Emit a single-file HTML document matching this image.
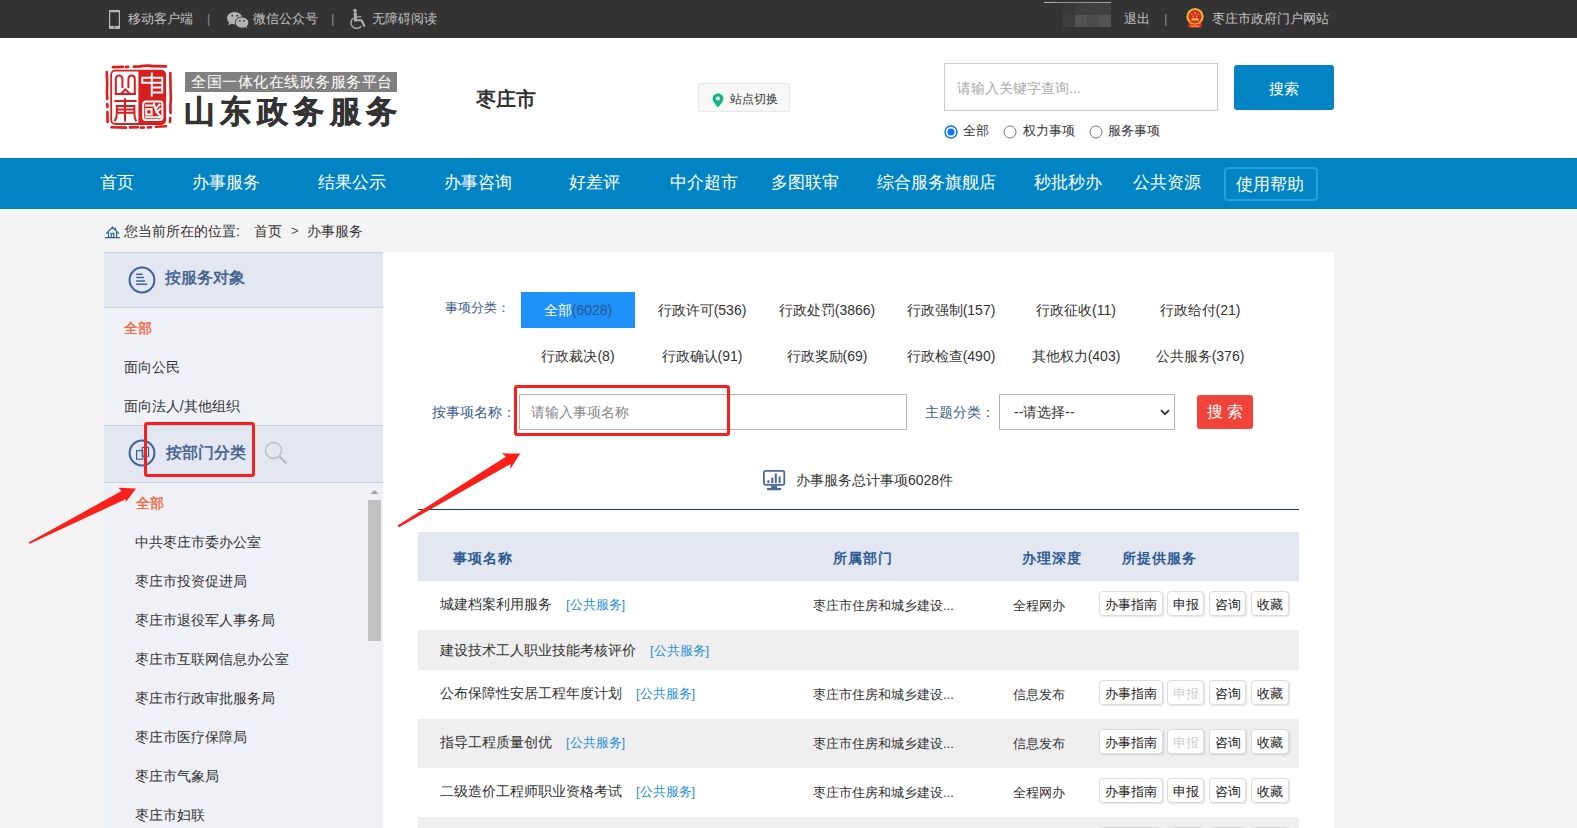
<!DOCTYPE html>
<html><head><meta charset="utf-8">
<style>
*{margin:0;padding:0;box-sizing:border-box}
html,body{width:1577px;height:828px;overflow:hidden;background:#f4f4f4;font-family:"Liberation Sans",sans-serif;color:#333}
.a{position:absolute;white-space:nowrap}
#top{position:absolute;left:0;top:0;width:1577px;height:38px;background:#333}
#top .t{position:absolute;top:9px;font-size:13px;line-height:20px;color:#c3c3c3}
#hdr{position:absolute;left:0;top:38px;width:1577px;height:120px;background:#fff}
#nav{position:absolute;left:0;top:158px;width:1577px;height:51px;background:#0084c4}
#nav .n{position:absolute;top:14px;font-size:17px;line-height:22px;color:#fff}
.th{top:296px;font-size:14px;line-height:20px;color:#2d5a92;font-weight:bold;letter-spacing:1.1px}
.row{left:35px;width:881px}
.c{position:absolute;white-space:nowrap;font-size:14px;line-height:20px;color:#333}
.tag{color:#2b8fd6;margin-left:14px;font-size:13px}
.d{font-size:13px}
.b{position:absolute;top:10px;height:25px;border:1px solid #dcdcdc;border-radius:4px;background:#fff;box-shadow:1px 1px 2px rgba(0,0,0,0.12);font-size:13px;line-height:25px;text-align:center;color:#222}
.b.dis{color:#d0d0d0}
</style></head><body>
<div id="top">
  <svg class="a" style="left:109px;top:10px" width="11" height="19" viewBox="0 0 11 19"><rect x="0" y="0" width="11" height="19" rx="0.8" fill="#b8b8b8"/><rect x="1.2" y="2.2" width="8.6" height="13.8" fill="#333"/><circle cx="5.5" cy="17.6" r="0.75" fill="#333"/></svg>
  <div class="t" style="left:128px">移动客户端</div>
  <div class="t" style="left:207px;color:#888">|</div>
  <svg class="a" style="left:226px;top:12px" width="23" height="17" viewBox="0 0 23 17"><ellipse cx="8.6" cy="6.2" rx="7.6" ry="6.2" fill="#b4b4b4"/><path d="M3 10.5 L2.3 13.2 L6 11.5z" fill="#b4b4b4"/><ellipse cx="16" cy="10.6" rx="6.8" ry="5.6" fill="#b4b4b4" stroke="#333" stroke-width="0.9"/><path d="M19.5 15 L21.2 16.6 L20.8 14z" fill="#b4b4b4"/><circle cx="6.2" cy="3.8" r="0.95" fill="#333"/><circle cx="11.2" cy="3.8" r="0.95" fill="#333"/><circle cx="13.8" cy="8.8" r="0.9" fill="#333"/><circle cx="18" cy="8.8" r="0.9" fill="#333"/></svg>
  <div class="t" style="left:253px">微信公众号</div>
  <div class="t" style="left:331px;color:#888">|</div>
  <svg class="a" style="left:349px;top:8px" width="17" height="22" viewBox="0 0 17 22"><circle cx="6" cy="2.6" r="1.75" fill="#b0b0b0"/><path d="M6.3 5.6 L6.3 12" stroke="#b0b0b0" stroke-width="3" stroke-linecap="round"/><path d="M7 8.9 L11.8 8.9" stroke="#b0b0b0" stroke-width="1.4" stroke-linecap="round"/><path d="M6 12.3 L12.5 12.3 L15.3 17.8" fill="none" stroke="#b0b0b0" stroke-width="2.1" stroke-linecap="round" stroke-linejoin="round"/><path d="M4.2 10.2 A5.7 5.7 0 1 0 12.2 18.2" fill="none" stroke="#b0b0b0" stroke-width="1.4"/></svg>
  <div class="t" style="left:372px">无障碍阅读</div>

  <div class="a" style="left:1044px;top:2px;width:67px;height:1px;background:linear-gradient(90deg,#bbb,#999 20%,#8a8a8a 50%,#999 80%,#aaa)"></div>
  <div class="a" style="left:1063px;top:3px;width:12px;height:12px;background:#383938"></div>
  <div class="a" style="left:1075px;top:3px;width:12px;height:12px;background:#3f3f3f"></div>
  <div class="a" style="left:1087px;top:3px;width:12px;height:12px;background:#3f3f3f"></div>
  <div class="a" style="left:1099px;top:3px;width:12px;height:12px;background:#404040"></div>
  <div class="a" style="left:1063px;top:15px;width:12px;height:12px;background:#3e3f41"></div>
  <div class="a" style="left:1075px;top:15px;width:12px;height:12px;background:#545454"></div>
  <div class="a" style="left:1087px;top:15px;width:12px;height:12px;background:#4a4c4e"></div>
  <div class="a" style="left:1099px;top:15px;width:12px;height:12px;background:#545252"></div>
  <div class="t" style="left:1124px">退出</div>
  <div class="t" style="left:1164px;color:#888">|</div>
  <svg class="a" style="left:1186px;top:8px" width="19" height="21" viewBox="0 0 19 21"><circle cx="9" cy="8.6" r="8.6" fill="#e8b83c"/><circle cx="9" cy="8.6" r="6.6" fill="#dc2a1e"/><circle cx="9" cy="5" r="1" fill="#f2c84a"/><circle cx="5.8" cy="6.2" r="0.7" fill="#f2c84a"/><circle cx="12.2" cy="6.2" r="0.7" fill="#f2c84a"/><circle cx="7.4" cy="8.2" r="0.7" fill="#f2c84a"/><circle cx="10.6" cy="8.2" r="0.7" fill="#f2c84a"/><path d="M6 10.2 H12 L13 12.6 H5z" fill="#f0c64a"/><path d="M2.2 13.5 Q9 16.5 15.8 13.5 L15.5 19.2 Q9 20.5 2.5 19.2z" fill="#e0301e"/><path d="M3.5 14.8 Q9 17.5 14.5 14.8" fill="none" stroke="#f0c64a" stroke-width="1"/><path d="M4.5 18.2 H13.5" stroke="#f0c64a" stroke-width="0.9"/></svg>
  <div class="t" style="left:1212px">枣庄市政府门户网站</div>
</div>

<div id="hdr">
  <svg class="a" style="left:104px;top:24px" width="70" height="70" viewBox="0 0 70 70">
    <g fill="none" stroke="#d81e1e" stroke-linecap="round">
    <path d="M9 5.2 L19 4.8 M22 5 L24 4.9 M30 4.6 L36 4.4 Q42 3.2 48 4 L62 4.4" stroke-width="2.8"/>
    <path d="M2.8 10 L3.2 22 Q2.6 30 3.3 37 M3.2 42 L3.5 45 M3.4 50 L3.6 60" stroke-width="2.6"/>
    <path d="M66.3 11 L66.6 28 Q67.2 36 66.4 44 L66.6 51 M66.2 56 L66 60" stroke-width="2.6"/>
    <path d="M7.5 65.3 L22 65.6 M26 65.4 L34 65.2 M37 65.6 L40 65.5 M44 65.4 L47 65.3 M52 64.8 L62 64.2" stroke-width="2.6"/>
    </g>
    <rect x="7.2" y="8.6" width="54" height="53.4" rx="4" fill="#fff" stroke="#d81e1e" stroke-width="1.8"/>
    <path d="M34.4 8.6 L57.2 8.6 Q61.2 8.6 61.2 12.6 L61.2 58 Q61.2 62 57.2 62 L34.4 62z" fill="#d81e1e"/>
    <g fill="none" stroke="#d81e1e" stroke-width="2" stroke-linecap="square">
      <path d="M11.8 31.8 L11.8 17.2 Q11.8 13.4 15.2 13.4 Q18.4 13.4 18.4 17.2 L18.4 25"/>
      <path d="M30.8 31.8 L30.8 17.2 Q30.8 13.4 27.6 13.4 Q24.4 13.4 24.4 17.2 L24.4 25"/>
      <path d="M11.8 32 L30.8 32 M16.8 32 L21.4 27.4 L26 32"/>
      <path d="M11.4 39 L31.6 39 M12.8 44 L30.4 44 L30.4 50.7 L12.8 50.7z M12.8 47.4 L30.4 47.4 M21 37.2 L21 58.4 M12.8 51 Q12.8 56 11 58.4 M30.4 51 Q30.4 56 31.8 58.4"/>
    </g>
    <g fill="none" stroke="#fff" stroke-width="2" stroke-linecap="square">
      <path d="M38.2 15.8 L47 15.8 M38.2 15.8 L38.2 20.8 L47 20.8 M47.8 11.6 L47.8 33.6 M50 15.8 L58.2 15.8 L58.2 30.4 M50 20.8 L58.2 20.8 M50 25.6 L58.2 25.6 M50 30.4 L58.2 30.4"/>
      <path d="M42 39.6 L56 39.6 Q58.4 39.6 58.4 42 L58.4 55.6 Q58.4 58 56 58 L41.6 58 Q39.2 58 39.2 55.6 L39.2 42.4 Q39.2 39.8 42 39.6 M42 43.4 L50 43.4 M42.2 47.2 L47.6 47.2 L47.6 52.6 L42.2 52.6z M42 55.2 L56 55.2 M50 42 Q51.4 50 56.4 54 M55.6 42.6 L52.8 45.6 M56 47 L52.6 50"/>
    </g>
  </svg>
  <div class="a" style="left:185px;top:34px;width:212px;height:20px;background:#808080"></div>
  <div class="a" style="left:191px;top:33px;font-size:15px;line-height:22px;color:#fff;letter-spacing:0.5px">全国一体化在线政务服务平台</div>
  <div class="a" style="left:184px;top:55px;font-size:31px;line-height:38px;color:#333;font-weight:bold;letter-spacing:5.4px;-webkit-text-stroke:0.5px #333">山东政务服务</div>
  <div class="a" style="left:476px;top:48px;font-size:20px;line-height:26px;color:#333;font-weight:bold">枣庄市</div>
  <div class="a" style="left:698px;top:45px;width:92px;height:29px;background:#f7f7f7;border:1px solid #e8e8e8"></div>
  <svg class="a" style="left:712px;top:54.8px" width="12" height="15" viewBox="0 0 12 15"><path d="M6 0.5 C2.8 0.5 0.6 2.8 0.6 5.8 C0.6 9 6 14.5 6 14.5 C6 14.5 11.4 9 11.4 5.8 C11.4 2.8 9.2 0.5 6 0.5z" fill="#14b87c"/><circle cx="6" cy="5.6" r="2" fill="#fff"/></svg>
  <div class="a" style="left:729.5px;top:52px;font-size:12px;line-height:18px;color:#333">站点切换</div>
  <div class="a" style="left:944px;top:25px;width:274px;height:48px;border:1px solid #ccc;background:#fff"></div>
  <div class="a" style="left:957px;top:41px;font-size:14px;line-height:18px;color:#aaa">请输入关键字查询...</div>
  <div class="a" style="left:1234px;top:27px;width:100px;height:45px;background:#0084c4;border-radius:3px"></div>
  <div class="a" style="left:1269px;top:41px;font-size:15px;line-height:20px;color:#fff">搜索</div>
  <svg class="a" style="left:943px;top:85.5px" width="16" height="16" viewBox="0 0 16 16"><circle cx="8" cy="8" r="6" fill="#fff" stroke="#0f76fa" stroke-width="1.5"/><circle cx="8" cy="8" r="3.6" fill="#0f76fa"/></svg>
  <div class="a" style="left:963px;top:84px;font-size:13px;line-height:18px;color:#333">全部</div>
  <svg class="a" style="left:1002px;top:85.5px" width="16" height="16" viewBox="0 0 16 16"><circle cx="8" cy="8" r="6" fill="#fff" stroke="#767676" stroke-width="1"/></svg>
  <div class="a" style="left:1023px;top:84px;font-size:13px;line-height:18px;color:#333">权力事项</div>
  <svg class="a" style="left:1088px;top:85.5px" width="16" height="16" viewBox="0 0 16 16"><circle cx="8" cy="8" r="6" fill="#fff" stroke="#767676" stroke-width="1"/></svg>
  <div class="a" style="left:1108px;top:84px;font-size:13px;line-height:18px;color:#333">服务事项</div>
</div>
<div id="nav">
  <div class="n" style="left:100px">首页</div>
  <div class="n" style="left:192px">办事服务</div>
  <div class="n" style="left:318px">结果公示</div>
  <div class="n" style="left:444px">办事咨询</div>
  <div class="n" style="left:569px">好差评</div>
  <div class="n" style="left:670px">中介超市</div>
  <div class="n" style="left:771px">多图联审</div>
  <div class="n" style="left:877px">综合服务旗舰店</div>
  <div class="n" style="left:1034px">秒批秒办</div>
  <div class="n" style="left:1133px">公共资源</div>
  <div class="a" style="left:1224px;top:8.5px;width:94px;height:34px;border:2px solid #22a0e4;border-radius:4px"></div>
  <div class="n" style="left:1236px;top:16px">使用帮助</div>
</div>

<svg class="a" style="left:104px;top:225px" width="17" height="14" viewBox="0 0 17 14"><path d="M2.1 8.6 L8.5 2.2 L14.9 8.6 M11.6 2.8 V5.6 M4.5 7 V12.2 M12.6 7 V12.2 M7.2 12.2 V8.3 H9.8 V12.2 M0.9 12.5 H16" fill="none" stroke="#2a64a0" stroke-width="1.25"/></svg>
<div class="a" style="left:124px;top:221px;font-size:14px;line-height:20px;color:#333">您当前所在的位置:</div>
<div class="a" style="left:254px;top:221px;font-size:14px;line-height:20px;color:#333">首页</div>
<div class="a" style="left:291px;top:221px;font-size:13px;line-height:20px;color:#555">&gt;</div>
<div class="a" style="left:307px;top:221px;font-size:14px;line-height:20px;color:#333">办事服务</div>

<div id="side" class="a" style="left:104px;top:252px;width:279px;height:576px;background:#f0f1f7">
  <div class="a" style="left:0;top:0;width:279px;height:56px;background:#e3e7f1;border-top:1px solid #c8d0e2;border-bottom:1px solid #c8d0e2"></div>
  <svg class="a" style="left:24px;top:14px" width="28" height="28" viewBox="0 0 28 28"><circle cx="14" cy="14" r="12.4" fill="none" stroke="#3b639c" stroke-width="2"/><path d="M8.2 8.2 H14.5 M8.2 11.6 H16 M8.2 15 H17 M8.2 18.3 H19.3" stroke="#3b639c" stroke-width="1.5"/></svg>
  <div class="a" style="left:61px;top:15px;font-size:16px;line-height:22px;color:#3b5c8c;-webkit-text-stroke:0.45px #3b5c8c">按服务对象</div>
  <div class="a" style="left:19.7px;top:66px;font-size:14px;line-height:20px;color:#f0643a;-webkit-text-stroke:0.35px #f0643a">全部</div>
  <div class="a" style="left:19.7px;top:106px;font-size:14px;line-height:18px;color:#333">面向公民</div>
  <div class="a" style="left:19.7px;top:145px;font-size:14px;line-height:18px;color:#333">面向法人/其他组织</div>
  <div class="a" style="left:0;top:173px;width:279px;height:58px;background:#e3e7f1;border-top:1px solid #c8d0e2;border-bottom:1px solid #c8d0e2"></div>
  <svg class="a" style="left:24px;top:187px" width="28" height="28" viewBox="0 0 28 28"><circle cx="14" cy="14" r="12.4" fill="none" stroke="#3b639c" stroke-width="2"/><rect x="8.6" y="11.6" width="6.2" height="8.6" fill="none" stroke="#3b639c" stroke-width="1.2"/><rect x="14.2" y="8.4" width="6.4" height="8.8" fill="none" stroke="#3b639c" stroke-width="1.2"/></svg>
  <div class="a" style="left:62px;top:190px;font-size:16px;line-height:22px;color:#3b5c8c;-webkit-text-stroke:0.45px #3b5c8c">按部门分类</div>
  <svg class="a" style="left:160px;top:189px" width="24" height="24" viewBox="0 0 24 24"><circle cx="9.5" cy="9.5" r="8" fill="none" stroke="#b8b8b8" stroke-width="1.3"/><path d="M15.5 15.5 L22.5 22.5" stroke="#b8b8b8" stroke-width="1.8"/></svg>
  <div class="a" style="left:32px;top:241px;font-size:14px;line-height:20px;color:#f0643a;-webkit-text-stroke:0.35px #f0643a">全部</div>
  <div class="a" style="left:31px;top:281px;font-size:14px;line-height:18px;color:#333">中共枣庄市委办公室</div>
  <div class="a" style="left:31px;top:320px;font-size:14px;line-height:18px;color:#333">枣庄市投资促进局</div>
  <div class="a" style="left:31px;top:359px;font-size:14px;line-height:18px;color:#333">枣庄市退役军人事务局</div>
  <div class="a" style="left:31px;top:398px;font-size:14px;line-height:18px;color:#333">枣庄市互联网信息办公室</div>
  <div class="a" style="left:31px;top:437px;font-size:14px;line-height:18px;color:#333">枣庄市行政审批服务局</div>
  <div class="a" style="left:31px;top:476px;font-size:14px;line-height:18px;color:#333">枣庄市医疗保障局</div>
  <div class="a" style="left:31px;top:515px;font-size:14px;line-height:18px;color:#333">枣庄市气象局</div>
  <div class="a" style="left:31px;top:554px;font-size:14px;line-height:18px;color:#333">枣庄市妇联</div>
  <svg class="a" style="left:266px;top:237px" width="9" height="6" viewBox="0 0 9 6"><path d="M0.5 5 L4.5 1 L8.5 5z" fill="#a3a3a3"/></svg>
  <div class="a" style="left:264px;top:248px;width:13px;height:141px;background:#c1c1c1"></div>
</div>

<div id="main" class="a" style="left:383px;top:252px;width:951px;height:576px;background:#fff">
  <div class="a" style="left:62px;top:47px;font-size:13px;line-height:18px;color:#3b5c8c">事项分类：</div>
  <div class="a" style="left:138px;top:40px;width:114px;height:36px;background:#1e90fa"></div>
  <div class="a" style="left:138px;top:48px;width:114px;text-align:center;font-size:14px;line-height:20px;color:#fff">全部<span style="color:#2a5a8c">(6028)</span></div>
  <div class="a" style="left:262px;top:48px;width:114px;text-align:center;font-size:14px;line-height:20px;color:#333">行政许可(536)</div>
  <div class="a" style="left:387px;top:48px;width:114px;text-align:center;font-size:14px;line-height:20px;color:#333">行政处罚(3866)</div>
  <div class="a" style="left:511px;top:48px;width:114px;text-align:center;font-size:14px;line-height:20px;color:#333">行政强制(157)</div>
  <div class="a" style="left:636px;top:48px;width:114px;text-align:center;font-size:14px;line-height:20px;color:#333">行政征收(11)</div>
  <div class="a" style="left:760px;top:48px;width:114px;text-align:center;font-size:14px;line-height:20px;color:#333">行政给付(21)</div>
  <div class="a" style="left:138px;top:94px;width:114px;text-align:center;font-size:14px;line-height:20px;color:#333">行政裁决(8)</div>
  <div class="a" style="left:262px;top:94px;width:114px;text-align:center;font-size:14px;line-height:20px;color:#333">行政确认(91)</div>
  <div class="a" style="left:387px;top:94px;width:114px;text-align:center;font-size:14px;line-height:20px;color:#333">行政奖励(69)</div>
  <div class="a" style="left:511px;top:94px;width:114px;text-align:center;font-size:14px;line-height:20px;color:#333">行政检查(490)</div>
  <div class="a" style="left:636px;top:94px;width:114px;text-align:center;font-size:14px;line-height:20px;color:#333">其他权力(403)</div>
  <div class="a" style="left:760px;top:94px;width:114px;text-align:center;font-size:14px;line-height:20px;color:#333">公共服务(376)</div>

  <div class="a" style="left:49px;top:150px;font-size:14px;line-height:20px;color:#3b5c8c">按事项名称：</div>
  <div class="a" style="left:136px;top:142px;width:388px;height:36px;border:1px solid #b4b4b4"></div>
  <div class="a" style="left:148px;top:150px;font-size:14px;line-height:20px;color:#888">请输入事项名称</div>
  <div class="a" style="left:542px;top:150px;font-size:14px;line-height:20px;color:#3b5c8c">主题分类：</div>
  <div class="a" style="left:616px;top:142px;width:176px;height:36px;border:1px solid #b4b4b4"></div>
  <div class="a" style="left:631px;top:150px;font-size:14px;line-height:20px;color:#333">--请选择--</div>
  <svg class="a" style="left:777px;top:157px" width="10" height="7" viewBox="0 0 10 7"><path d="M1 1.2 L5 5.2 L9 1.2" fill="none" stroke="#333" stroke-width="1.8"/></svg>
  <div class="a" style="left:814px;top:143px;width:56px;height:34px;background:#f2433a;border-radius:3px"></div>
  <div class="a" style="left:814px;top:149px;width:56px;text-align:center;font-size:16px;line-height:22px;color:#fff;letter-spacing:4px;text-indent:4px">搜索</div>

  <svg class="a" style="left:380px;top:218px" width="23" height="21" viewBox="0 0 23 21"><rect x="0.9" y="0.9" width="20.4" height="14" rx="1.8" fill="none" stroke="#4a6a9a" stroke-width="1.8"/><rect x="4.4" y="10.2" width="2" height="3" fill="#4a6a9a"/><rect x="8.2" y="7.8" width="2.2" height="5.4" fill="#4a6a9a"/><rect x="11.8" y="3.4" width="2" height="9.8" fill="#4a6a9a"/><rect x="15.6" y="6.4" width="2" height="6.8" fill="#4a6a9a"/><path d="M8.5 15.5 H13.7 L14.2 18 H8z" fill="#4a6a9a"/><rect x="3.8" y="18" width="14.6" height="2.2" rx="1" fill="#4a6a9a"/></svg>
  <div class="a" style="left:413px;top:218px;font-size:14px;line-height:20px;color:#333">办事服务总计事项6028件</div>
  <div class="a" style="left:35px;top:257px;width:881px;height:1px;background:#103a5a"></div>
<div class="a" style="left:35px;top:280px;width:881px;height:49px;background:#e3e7f1"></div>
  <div class="a th" style="left:70px">事项名称</div>
  <div class="a th" style="left:450px">所属部门</div>
  <div class="a th" style="left:639px">办理深度</div>
  <div class="a th" style="left:739px">所提供服务</div>
  <div class="a row" style="top:329px;height:49px;background:#fff"><div class="c" style="left:22px;top:13px">城建档案利用服务<span class="tag">[公共服务]</span></div><div class="c d" style="left:395px;top:14.5px">枣庄市住房和城乡建设...</div><div class="c d" style="left:595px;top:14.5px">全程网办</div><div class="b" style="left:681px;width:64px">办事指南</div><div class="b" style="left:749px;width:37px">申报</div><div class="b" style="left:791px;width:37px">咨询</div><div class="b" style="left:833px;width:38px">收藏</div></div>
  <div class="a row" style="top:378px;height:40px;background:#efefef"><div class="c" style="left:22px;top:10px">建设技术工人职业技能考核评价<span class="tag">[公共服务]</span></div></div>
  <div class="a row" style="top:418px;height:49px;background:#fff"><div class="c" style="left:22px;top:13px">公布保障性安居工程年度计划<span class="tag">[公共服务]</span></div><div class="c d" style="left:395px;top:14.5px">枣庄市住房和城乡建设...</div><div class="c d" style="left:595px;top:14.5px">信息发布</div><div class="b" style="left:681px;width:64px">办事指南</div><div class="b dis" style="left:749px;width:37px">申报</div><div class="b" style="left:791px;width:37px">咨询</div><div class="b" style="left:833px;width:38px">收藏</div></div>
  <div class="a row" style="top:467px;height:49px;background:#efefef"><div class="c" style="left:22px;top:13px">指导工程质量创优<span class="tag">[公共服务]</span></div><div class="c d" style="left:395px;top:14.5px">枣庄市住房和城乡建设...</div><div class="c d" style="left:595px;top:14.5px">信息发布</div><div class="b" style="left:681px;width:64px">办事指南</div><div class="b dis" style="left:749px;width:37px">申报</div><div class="b" style="left:791px;width:37px">咨询</div><div class="b" style="left:833px;width:38px">收藏</div></div>
  <div class="a row" style="top:516px;height:49px;background:#fff"><div class="c" style="left:22px;top:13px">二级造价工程师职业资格考试<span class="tag">[公共服务]</span></div><div class="c d" style="left:395px;top:14.5px">枣庄市住房和城乡建设...</div><div class="c d" style="left:595px;top:14.5px">全程网办</div><div class="b" style="left:681px;width:64px">办事指南</div><div class="b" style="left:749px;width:37px">申报</div><div class="b" style="left:791px;width:37px">咨询</div><div class="b" style="left:833px;width:38px">收藏</div></div>
  <div class="a row" style="top:565px;height:49px;background:#efefef"><div class="b" style="left:681px;width:64px">办事指南</div><div class="b" style="left:749px;width:37px">申报</div><div class="b" style="left:791px;width:37px">咨询</div><div class="b" style="left:833px;width:38px">收藏</div></div>

</div>

<div class="a" style="left:144px;top:422px;width:111px;height:55px;border:3px solid #fa1f1f;border-radius:3px"></div>
<div class="a" style="left:514px;top:385px;width:216px;height:51px;border:3px solid #fa1f1f;border-radius:3px"></div>
<svg class="a" style="left:0;top:0" width="1577" height="828" viewBox="0 0 1577 828">
  <path d="M28.5 542.5 L121.5 491 L118.3 487.7 L136 488.6 L125.5 502.6 L126 499 L29.8 543.8z" fill="#fa2019"/>
  <path d="M397.5 525.6 L505.8 456.8 L502 453.3 L520.2 453.6 L510.4 469.1 L510.4 464.1 L399 527.2z" fill="#fa2019"/>
</svg>
</body></html>
